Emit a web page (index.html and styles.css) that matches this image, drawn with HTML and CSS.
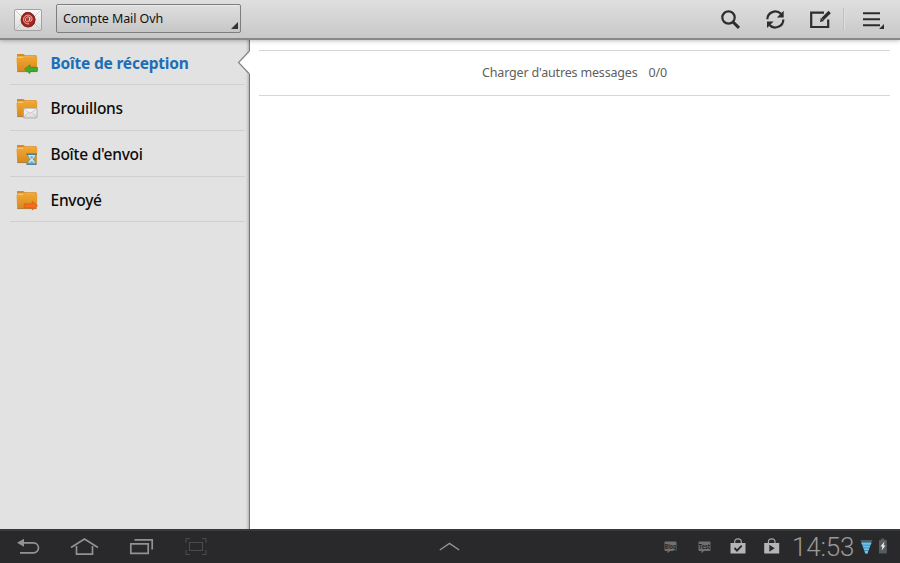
FILE: index.html
```
<!DOCTYPE html>
<html lang="fr">
<head>
<meta charset="utf-8">
<title>Compte Mail Ovh</title>
<link rel="stylesheet" href="styles.css">
</head>
<body>
<svg width="0" height="0" class="defs" aria-hidden="true">
  <defs>
    <linearGradient id="fold" x1="0" y1="0" x2="0" y2="1"><stop offset="0" stop-color="#f2a630"/><stop offset="1" stop-color="#d68a20"/></linearGradient>
    <linearGradient id="paper" x1="0" y1="0" x2="0" y2="1"><stop offset="0" stop-color="#fafafa"/><stop offset="1" stop-color="#d8d8d8"/></linearGradient>
    <radialGradient id="wax"><stop offset="0" stop-color="#b8453a"/><stop offset="1" stop-color="#8f1c18"/></radialGradient>
    <symbol id="folder" viewBox="0 0 24 24">
      <path d="M2 3h6.500l1.400 1.200h11.600v3H2z" fill="#d98a1c"/>
      <path d="M2.500 5.400h17.500v2h-17.500z" fill="#f3c67c"/>
      <path d="M1.500 7h6l1.500-1.200h13.300L21.800 20.300H2.200z" fill="url(#fold)"/>
      <path d="M2.200 20.600h19.500" stroke="#a9701f" stroke-width=".9"/>
    </symbol>
  </defs>
</svg>
<div class="app">
  <header class="topbar">
    <svg class="logo" width="30" height="24" viewBox="0 0 30 24">
      <rect x="1.500" y="1.500" width="27" height="21" rx="1.500" fill="url(#paper)" stroke="#a2a2a2"/>
      <path d="M2.500 2.500L12 12 2.500 21.500M27.500 2.500L18 12l9.500 9.500" fill="none" stroke="#c2c2c2" stroke-width=".8"/>
      <path d="M12 4.800q3-1 6 .2 3.800 2 4.200 6.500-.2 5-3.800 6.800-3.300 1.600-6.600 0Q8.300 16.500 8 12q.4-5 4-7.200z" fill="url(#wax)" stroke="#8f1c18" stroke-width=".9"/>
      <path d="M17 9.600c-2.800-2-5 .3-4.500 2.800.6 2 3.600 1.600 4-.4l.5-2.400c-.8 2.800-.5 4 .9 3.500 1.700-.8 1.500-4-.4-5.300-2.300-1.500-5.800-.5-6.700 2.300-.9 3.300 1.400 6.300 5.200 5.700" fill="none" stroke="#f3cfca" stroke-width=".9"/>
    </svg>
    <div class="account"><span>Compte Mail Ovh</span></div>
    <div class="actions">
      <svg width="180" height="38" viewBox="715 0 180 38">
        <g fill="none" stroke="#2d2d2d">
          <circle cx="728.500" cy="17.500" r="6.200" stroke-width="2.200"/>
          <path d="M733 22l6 5.800" stroke-width="3"/>
          <path d="M767.300 19.300a8 7.900 0 0 1 13.700-5.400M783.300 19.500a8 7.900 0 0 1-13.700 5.600" stroke-width="2.200"/>
          <path d="M824 12.700h-12.800v14.300h17v-7.500" stroke-width="2.200"/>
          <path d="M822.500 19.200l7.200-7.200" stroke-width="3.200"/>
          <path d="M863 13.200h17M863 19.300h17M863 25.300h17" stroke-width="2"/>
        </g>
        <path d="M783.700 10.800v6.600h-6.800zM767 28v-6.400h6.600zM820.800 17.700l3.200 3.200-4 1.200zM884 24v5h-5z" fill="#2d2d2d"/>
        <path d="M843.500 8v22" stroke="#c0c0c0"/><path d="M844.500 8v22" stroke="#dedede"/>
      </svg>
    </div>
  </header>
  <main class="body">
    <nav class="folders">
      <div class="row selected">
        <svg width="24" height="24" viewBox="0 0 24 24"><use href="#folder"/><path d="M9.500 18.200l5.500-4.500v2.600h7.500v4h-7.500v2.400z" fill="#43ab30" stroke="#2c841f" stroke-width=".6"/></svg>
        <span>Boîte de réception</span>
      </div>
      <div class="row">
        <svg width="24" height="24" viewBox="0 0 24 24"><use href="#folder"/><rect x="8.500" y="12.200" width="13.500" height="9.800" rx=".8" fill="url(#paper)" stroke="#a5a5a5" stroke-width=".8"/><path d="M9 13l6 4.600 6.500-4.600M9 21l4.500-4.500M21.500 21L17 16.500" fill="none" stroke="#b4b4b4" stroke-width=".7"/></svg>
        <span>Brouillons</span>
      </div>
      <div class="row">
        <svg width="24" height="24" viewBox="0 0 24 24"><use href="#folder"/><path d="M12.500 12.500h8.300l-1 3-1.900 1.800 1.900 1.800 1 3h-8.300l1-3 1.900-1.800-1.900-1.800z" fill="#c9e8f3" stroke="#4794b4" stroke-width=".8"/><path d="M14.500 14.500h4.300l-2.100 2zM14 20.800l2.700-1.600 2.600 1.600z" fill="#36a7d0"/><path d="M11.300 12.100h10.500M11.300 22.100h10.500" stroke="#526e7d" stroke-width="1.400"/></svg>
        <span>Boîte d'envoi</span>
      </div>
      <div class="row">
        <svg width="24" height="24" viewBox="0 0 24 24"><use href="#folder"/><path d="M22.500 17.600l-5.200-4.200v2.400H9.200v3.900h8.100v2.300z" fill="#f66d1c" stroke="#dc5410" stroke-width=".6"/></svg>
        <span>Envoyé</span>
      </div>
      <svg class="notch" width="13" height="24" viewBox="0 0 13 24"><path d="M13 .5h-1L1.500 11.500l10.500 11h1z" fill="#fff"/><path d="M12 .5L1.500 11.500l10.500 11" fill="none" stroke="#858585" stroke-width="1.200"/></svg>
    </nav>
    <section class="messages">
      <div class="load"><span class="more">Charger d'autres messages</span><span class="count">0/0</span></div>
    </section>
  </main>
  <footer class="sysbar">
    <svg width="210" height="34" viewBox="0 529 210 34">
      <g fill="none" stroke="#929292" stroke-width="1.700">
        <path d="M23 542.800h10.500a5 5 0 0 1 0 10H20"/>
        <path d="M71 547.500l13.500-8.500 13.500 8.500M76.500 546v8.200h16V546"/>
        <path d="M130.800 543.900h17.400v9.500h-17.400zM134.500 539.900h17.700v9.500"/>
      </g>
      <path d="M24 538.800v8l-7-4z" fill="#929292"/>
      <g fill="none" stroke="#484a4b" stroke-width="1.100"><path d="M190 538.500h-4v4.500M202 538.500h4v4.500M190 554.500h-4V550M202 554.500h4V550M189.500 542.500h13v8h-13z"/></g>
    </svg>
    <svg width="24" height="34" viewBox="438 529 24 34"><path d="M439.800 550l9.700-6.500 9.700 6.500" fill="none" stroke="#929292" stroke-width="1.500"/></svg>
    <div class="status">
      <svg width="124" height="34" viewBox="660 529 124 34">
        <g fill="#707070"><path d="M665.500 541.500h10a1 1 0 0 1 1 1v7.500a1 1 0 0 1-1 1h-5.500l-2.500 2.200V551h-2a1 1 0 0 1-1-1v-7.500a1 1 0 0 1 1-1zM699.500 541.500h10a1 1 0 0 1 1 1v7.500a1 1 0 0 1-1 1h-5.500l-2.500 2.200V551h-2a1 1 0 0 1-1-1v-7.500a1 1 0 0 1 1-1z"/></g>
        <g class="tiny"><text x="664.800" y="548.800" textLength="11.400" lengthAdjust="spacingAndGlyphs">Blog</text><text x="698.800" y="548.800" textLength="11.400" lengthAdjust="spacingAndGlyphs">Test</text></g>
        <g fill="#b5b5b5"><path d="M730.500 543h15V553.500h-15zM764.200 543h15V553.500h-15z"/></g>
        <path d="M734.700 543v-1.200a3.300 3 0 0 1 6.600 0v1.200M768.400 543v-1.200a3.300 3 0 0 1 6.600 0v1.200" fill="none" stroke="#a5a5a5" stroke-width="1.200"/>
        <path d="M734.500 548l2.500 2.600 4.700-5" fill="none" stroke="#29292b" stroke-width="1.900"/>
        <path d="M769.300 544.700v7l5.400-3.500z" fill="#29292b"/>
      </svg>
      <span class="clock">14:53</span>
      <svg width="32" height="34" viewBox="858 529 32 34">
        <path d="M860.200 540h12.400l-1.300 2h-9.800z" fill="#555d61"/>
        <path d="M861.200 542.400h10.400l-4 11.200h-2.400z" fill="#3b7d9d"/>
        <path d="M861.200 542.600h10.400l-.9 2.100h-8.600zM862.500 545.500h7.800l-.8 2.100h-6.200zM863.600 548.300h5.600l-.6 2h-4.400zM864.600 551h3.600l-.7 2.400h-2.200z" fill="#6bc3ed"/>
        <path d="M881.200 538.500h3.200v1.500h2.400v13.500h-7.800V540h2.200z" fill="#555b5e"/>
        <path d="M884.500 541.500l-4 5h2l-.9 3.900 3.900-5h-2z" fill="#f2f2f2"/>
      </svg>
    </div>
  </footer>
</div>
</body>
</html>
```
FILE: styles.css
```
* { box-sizing: border-box; }
body { margin: 0; font-family: "Noto Sans", "Open Sans", sans-serif; }
.defs { position: absolute; }
.app { width: 900px; height: 563px; display: flex; flex-direction: column; overflow: hidden; background: #fff; }
.topbar {
  height: 40px; flex: none; display: flex; align-items: flex-start; position: relative; z-index: 2;
  background: linear-gradient(#dfdfdf, #c8c8c8); border-bottom: 2px solid #888;
  box-shadow: 0 1px 4px rgba(0, 0, 0, .25);
}
.logo { margin: 8px 13px 0 13px; }
.account {
  position: relative; width: 185px; height: 29px; margin-top: 4px; padding-left: 6px;
  display: flex; align-items: center; border: 1px solid #7e7e7e; border-radius: 2px;
  background: linear-gradient(#dfdfdf, #c6c6c6); box-shadow: inset 0 1px #ececec;
  font-size: 12.5px; letter-spacing: -.1px; color: #111; white-space: nowrap;
}
.account::after {
  content: ""; position: absolute; right: 2px; bottom: 3px;
  border-left: 7px solid transparent; border-bottom: 7px solid #333;
}
.actions { margin-left: auto; padding-right: 5px; height: 38px; }
.actions svg, .sysbar svg { display: block; }
.body { flex: 1; display: flex; min-height: 0; }
.folders {
  position: relative; width: 250px; background: #e2e2e2; padding-left: 10px;
  border-right: 1px solid #777; box-shadow: inset -3px 0 3px -2px rgba(0, 0, 0, .25);
}
.row {
  height: 46px; width: 235px; padding-left: 5px; display: flex; align-items: center; gap: 11.5px;
  border-bottom: 1px solid #d0d0d0; font-size: 15.5px; font-weight: 500; letter-spacing: -.25px;
  color: #0c0c0c; white-space: nowrap;
}
.row.selected { height: 45px; padding-top: 1px; font-weight: 700; letter-spacing: -.2px; color: #1b6fb7; }
.row:nth-child(4) { height: 45px; padding-top: 1px; }
.notch { position: absolute; right: -1px; top: 11px; }
.messages { flex: 1; padding: 10px 10px 0 9px; }
.load {
  height: 46px; border-top: 1px solid #d6d6d6; border-bottom: 1px solid #d6d6d6;
  display: flex; align-items: center; justify-content: center; gap: 11px; padding-bottom: 1px;
  font-size: 12.5px; letter-spacing: -.17px; color: #606060; white-space: nowrap;
}
.sysbar {
  height: 34px; flex: none; display: flex; background: #29292b;
  box-shadow: inset 0 2px #38393b;
}
.sysbar > svg:nth-child(2) { margin-left: 228px; }
.status { display: flex; margin-left: auto; padding-right: 10px; }
.clock {
  width: 74px; padding-left: 8px; font: 300 26px/36px Roboto, sans-serif;
  letter-spacing: -.2px; color: #999; white-space: nowrap;
}
.tiny { font: 700 6.5px "Noto Sans", sans-serif; fill: #242426; }
```
